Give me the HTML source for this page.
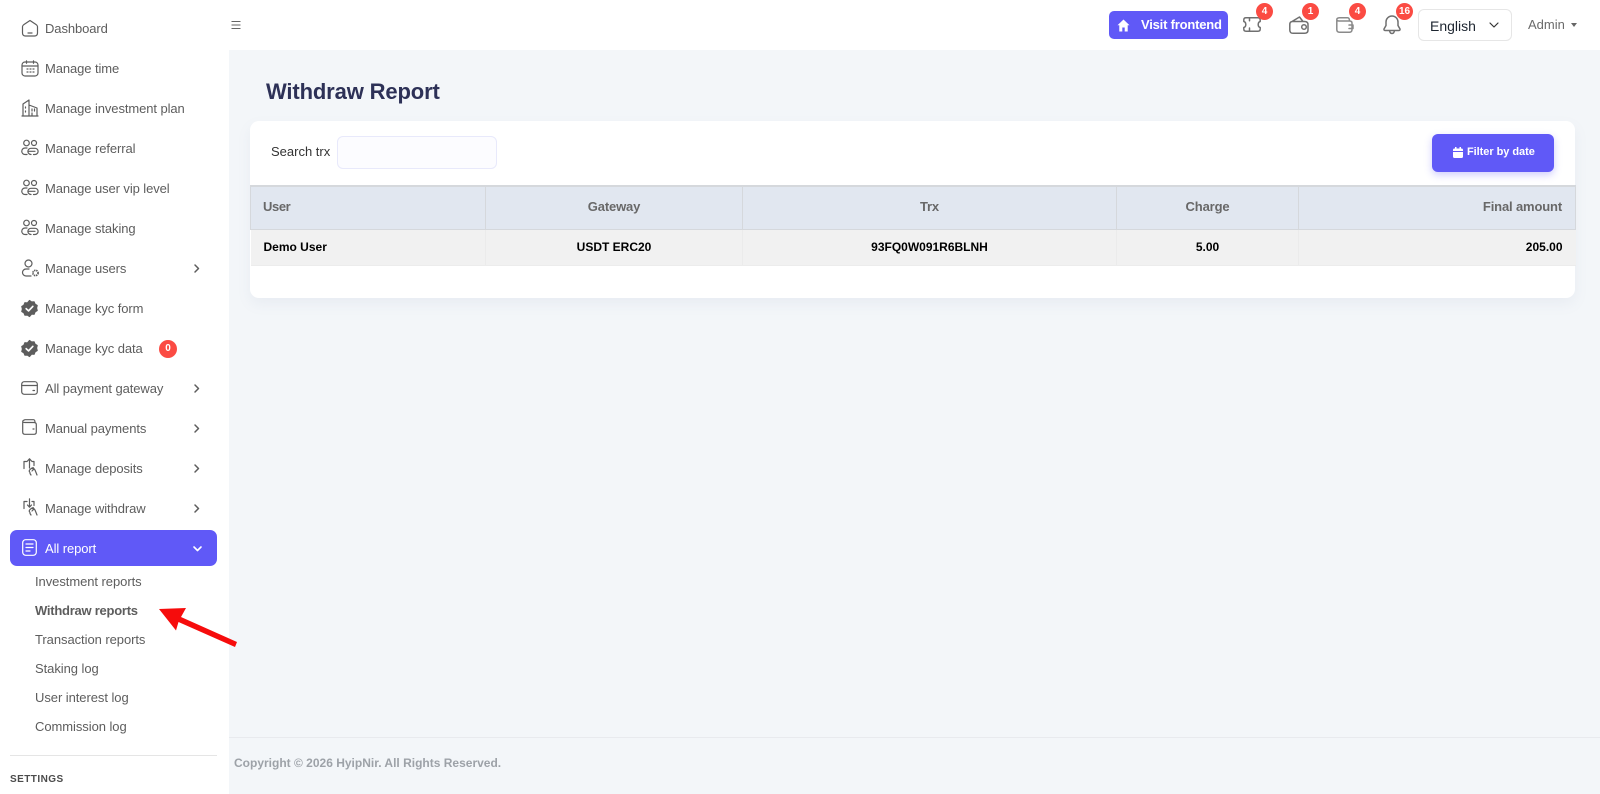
<!DOCTYPE html>
<html lang="en">
<head>
<meta charset="utf-8">
<title>Withdraw Report</title>
<style>
html,body{margin:0;padding:0;width:1600px;height:794px;overflow:hidden;background:#f3f6f9;font-family:"Liberation Sans",sans-serif;color:#5d5d5d}
.a{position:absolute;white-space:nowrap}
#side{position:absolute;left:0;top:0;width:229px;height:794px;background:#fff}
#top{position:absolute;left:229px;top:0;width:1371px;height:50px;background:#fff}
.m{position:absolute;left:45px;font-size:13px;line-height:16px;color:#5d5d5d;white-space:nowrap;letter-spacing:-.09px}
.s{position:absolute;left:35px;font-size:13px;line-height:16px;color:#5d5d5d;white-space:nowrap;letter-spacing:-.06px}
svg{position:absolute;overflow:visible;fill:none;stroke:#5d5d5d;stroke-width:1.2;stroke-linecap:round;stroke-linejoin:round}
svg.h{stroke-width:1.5}
.b{position:absolute;background:#fb4b43;color:#fff;border-radius:50%;font-weight:700;font-size:10px;text-align:center;width:17px;height:17px;line-height:17px}
th,td{padding:0;box-sizing:border-box}
th{font-size:13px;letter-spacing:-.15px;padding-bottom:2px}
td{font-size:12px;padding-bottom:1px}
</style>
</head>
<body>
<div id="side"></div>
<div id="top"></div>

<!-- sidebar icons -->
<svg style="left:21px;top:19px" width="18" height="18" viewBox="0 0 18 18"><path d="M1.500 7.500Q1.500 6.500 3 5.500L9 1.500l6 4q1.500 1 1.500 2v6.500q0 3-3 3h-9q-3 0-3-3zM7 14h4"/></svg>
<svg style="left:21px;top:60px" width="18" height="17" viewBox="0 0 18 17"><rect x="1" y="2" width="16" height="14" rx="3"/><path d="M1 6h16M5.500 .8v2.500M12.500 .8v2.500M6 9h1M9 9h1M12 9h1M6 12h1M9 12h1M12 12h1"/></svg>
<svg style="left:21px;top:99px" width="18" height="18" viewBox="0 0 18 18"><path d="M2 17V5l6-4v16M8 6l8 3v8M1 17h16M4.500 8v1M4.500 12v1M11 10v2M13.500 10v2M11 14v3"/></svg>
<svg style="left:21px;top:139px" width="18" height="17" viewBox="0 0 18 17"><circle cx="5.500" cy="4" r="2.800"/><circle cx="13" cy="4" r="2.500"/><path d="M6 9H4a3.200 3.200 0 0 0 0 6.500h2M10 15.500a3 3 0 0 1 0-6.200h4a3 3 0 0 1 0 6.200h-1.500M8 12.300h6"/></svg>
<svg style="left:21px;top:179px" width="18" height="17" viewBox="0 0 18 17"><circle cx="5.500" cy="4" r="2.800"/><circle cx="13" cy="4" r="2.500"/><path d="M6 9H4a3.200 3.200 0 0 0 0 6.500h2M10 15.500a3 3 0 0 1 0-6.200h4a3 3 0 0 1 0 6.200h-1.500M8 12.300h6"/></svg>
<svg style="left:21px;top:219px" width="18" height="17" viewBox="0 0 18 17"><circle cx="5.500" cy="4" r="2.800"/><circle cx="13" cy="4" r="2.500"/><path d="M6 9H4a3.200 3.200 0 0 0 0 6.500h2M10 15.500a3 3 0 0 1 0-6.200h4a3 3 0 0 1 0 6.200h-1.500M8 12.300h6"/></svg>
<svg style="left:21px;top:259px" width="18" height="18" viewBox="0 0 18 18"><circle cx="7.500" cy="4.500" r="3.500"/><path d="M8 10H5a3.500 3.500 0 0 0 0 7h5"/><circle cx="14.500" cy="14" r="2.600" stroke-width="1.700" stroke-dasharray="1.400 .7" stroke-linecap="butt"/></svg>
<svg style="left:21px;top:300px" width="17" height="17" viewBox="0 0 18 18"><path d="M9 .5l2.200 1.600 2.700-.2 1 2.500 2.300 1.400-.7 2.700.7 2.700-2.300 1.400-1 2.500-2.700-.2L9 17.500l-2.200-1.600-2.700.2-1-2.500L.8 12.200l.7-2.700-.7-2.700 2.300-1.400 1-2.500 2.700.2z" fill="#5d5d5d"/><path d="M5.500 9.200 8 11.500l4.500-4.700" stroke="#fff" stroke-width="1.800"/></svg>
<svg style="left:21px;top:340px" width="17" height="17" viewBox="0 0 18 18"><path d="M9 .5l2.200 1.600 2.700-.2 1 2.500 2.300 1.400-.7 2.700.7 2.700-2.300 1.400-1 2.500-2.700-.2L9 17.500l-2.200-1.600-2.700.2-1-2.500L.8 12.200l.7-2.700-.7-2.700 2.300-1.400 1-2.500 2.700.2z" fill="#5d5d5d"/><path d="M5.500 9.200 8 11.500l4.500-4.700" stroke="#fff" stroke-width="1.800"/></svg>
<svg style="left:21px;top:381px" width="17" height="14" viewBox="0 0 17 14"><rect x=".7" y=".7" width="15.600" height="12.600" rx="2.500"/><path d="M.7 4.500h15.600M12 9.500h1.500"/></svg>
<svg style="left:22px;top:419px" width="15" height="16" viewBox="0 0 15 16"><path d="M.7 3.500V13q0 2.300 2.300 2.300h9q2.300 0 2.300-2.300V5.500Q14.300 3.500 12 3.500H3Q.7 3.500.7 2.500T3 .7h8.500q1.500 0 1.500 2.800M11 10h1"/></svg>
<svg style="left:23px;top:458px" width="15" height="18" viewBox="0 0 15 18"><path d="M4 3.500H1v7M6.500 10V1M4.500 3l2-2.200L8.500 3M9 3.500h2v4M7 14.500q-1.500-1.500 0-3l2-1.500 1.500 1.500L9 13M8 17l-1-1.500M10 9.500l2 2.500 2 5"/></svg>
<svg style="left:23px;top:498px" width="15" height="18" viewBox="0 0 15 18"><path d="M4 3.500H1v7M6.500 9V.8M4.500 7l2 2.200L8.500 7M9 3.500h2v4M7 14.500q-1.500-1.500 0-3l2-1.500 1.500 1.500L9 13M8 17l-1-1.500M10 9.500l2 2.500 2 5"/></svg>

<!-- sidebar menu -->
<div class="m" style="top:21px">Dashboard</div>
<div class="m" style="top:61px">Manage time</div>
<div class="m" style="top:101px">Manage investment plan</div>
<div class="m" style="top:141px">Manage referral</div>
<div class="m" style="top:181px">Manage user vip level</div>
<div class="m" style="top:221px">Manage staking</div>
<div class="m" style="top:261px">Manage users</div>
<div class="m" style="top:301px">Manage kyc form</div>
<div class="m" style="top:341px">Manage kyc data</div>
<div class="m" style="top:381px">All payment gateway</div>
<div class="m" style="top:421px">Manual payments</div>
<div class="m" style="top:461px">Manage deposits</div>
<div class="m" style="top:501px">Manage withdraw</div>
<div class="b" style="left:159px;top:340px;width:18px;height:18px;line-height:18px">0</div>

<svg style="left:194px;top:264px" width="6" height="9" viewBox="0 0 6 9"><path d="M1 1l3.500 3.500L1 8" stroke-width="1.500"/></svg>
<svg style="left:194px;top:384px" width="6" height="9" viewBox="0 0 6 9"><path d="M1 1l3.500 3.500L1 8" stroke-width="1.500"/></svg>
<svg style="left:194px;top:424px" width="6" height="9" viewBox="0 0 6 9"><path d="M1 1l3.500 3.500L1 8" stroke-width="1.500"/></svg>
<svg style="left:194px;top:464px" width="6" height="9" viewBox="0 0 6 9"><path d="M1 1l3.500 3.500L1 8" stroke-width="1.500"/></svg>
<svg style="left:194px;top:504px" width="6" height="9" viewBox="0 0 6 9"><path d="M1 1l3.500 3.500L1 8" stroke-width="1.500"/></svg>

<div class="a" style="left:10px;top:530px;width:207px;height:36px;background:#6059f7;border-radius:7px"></div>
<svg style="left:22px;top:539px;stroke:#fff" width="15" height="17" viewBox="0 0 15 17"><rect x=".7" y=".7" width="13.600" height="15.600" rx="3"/><path d="M4 5h7M4 8.500h7M4 12h4"/></svg>
<div class="m" style="top:541px;color:#fff">All report</div>
<svg style="left:193px;top:546px;stroke:#fff" width="9" height="6" viewBox="0 0 9 6"><path d="M1 1l3.500 3.500L8 1" stroke-width="1.600"/></svg>

<div class="s" style="top:574px">Investment reports</div>
<div class="s" style="top:603px;font-weight:700;letter-spacing:-.25px">Withdraw reports</div>
<div class="s" style="top:632px">Transaction reports</div>
<div class="s" style="top:661px">Staking log</div>
<div class="s" style="top:690px">User interest log</div>
<div class="s" style="top:719px">Commission log</div>

<div class="a" style="left:10px;top:755px;width:207px;height:1px;background:#e5e5e5"></div>
<div class="a" style="left:10px;top:773px;font-size:10px;line-height:14px;font-weight:700;letter-spacing:.45px;color:#4b4b4b">SETTINGS</div>

<!-- red arrow -->
<svg style="left:159px;top:608px;stroke:none" width="78" height="40" viewBox="0 0 78 40"><path d="M0 1 27 0 22 9 78 34 76 39 19.500 14 17 22.500z" fill="#f60c0c"/></svg>

<!-- header -->
<svg style="left:231px;top:20px;stroke:#666" width="10" height="10" viewBox="0 0 10 10"><path d="M.5 1.500h9M.5 5h9M.5 8.500h9" stroke-width="1.100" stroke-linecap="butt"/></svg>

<div class="a" style="left:1109px;top:11px;width:119px;height:28px;background:#6059f7;border-radius:5px"></div>
<svg style="left:1117px;top:19px;stroke:none" width="13" height="13" viewBox="0 0 13 13"><path d="M6.500.5.500 6.300h1.800V12.500h3V8.500h2.400v4h3V6.300h1.800z" fill="#fff"/></svg>
<div class="a" style="left:1141px;top:17px;font-size:13px;line-height:16px;font-weight:700;color:#fff;letter-spacing:-.2px">Visit frontend</div>

<svg class="h" style="left:1243px;top:17px;stroke:#707070" width="18" height="15" viewBox="0 0 18 15"><path d="M3 .8h12q2.200 0 2.200 2.200v1.500q-2 .6-2 3t2 3V12q0 2.200-2.200 2.200H3Q.8 14.200.8 12v-1.500q2-.6 2-3t-2-3V3Q.8.800 3 .8zM6.500.8v3M6.500 11v3.200"/></svg>
<svg class="h" style="left:1289px;top:16px;stroke:#707070" width="20" height="18" viewBox="0 0 20 18"><path d="M3 5.500 10.500 1 14 5.500M3.500 5.500h12q3.500 0 3.500 3v5.500q0 3.300-3.500 3.300H4Q.8 17.300.8 14V8.500q0-3 2.700-3z"/><circle cx="15" cy="11" r="2.300"/></svg>
<svg class="h" style="left:1336px;top:17px;stroke:#8a8a8a" width="18" height="16" viewBox="0 0 18 16"><path d="M.8 3.500V12.500Q.8 15.200 3.500 15.200h10q2.500 0 2.500-2.700V6Q16 4 13.500 4H3Q.8 4 .8 2.500T3.500.8h8q2 0 2 3.200M13 8h4v3.500h-4"/></svg>
<svg class="h" style="left:1383px;top:15px;stroke:#707070" width="18" height="19" viewBox="0 0 18 19"><path d="M9 1a6 6 0 0 0-6 6v3.500L1 14q-.2 1.500 1 1.500h14q1.200 0 1-1.500l-2-3.500V7a6 6 0 0 0-6-6zM6.500 15.500q.5 3 2.500 3t2.500-3"/></svg>
<div class="b" style="left:1256px;top:3px">4</div>
<div class="b" style="left:1302px;top:3px">1</div>
<div class="b" style="left:1349px;top:3px">4</div>
<div class="b" style="left:1396px;top:3px">16</div>

<div class="a" style="left:1418px;top:9px;width:94px;height:32px;box-sizing:border-box;border:1px solid #e6e6e6;border-radius:6px;background:#fff"></div>
<div class="a" style="left:1430px;top:17px;font-size:14px;line-height:18px;color:#1d2530">English</div>
<svg style="left:1489px;top:22px;stroke:#333" width="10" height="6" viewBox="0 0 10 6"><path d="M1 1l4 4 4-4"/></svg>
<div class="a" style="left:1528px;top:17px;font-size:13px;line-height:16px;color:#6b6b6b">Admin</div>
<div class="a" style="left:1571px;top:23px;width:0;height:0;border:3.500px solid transparent;border-top:4px solid #666;border-bottom:0"></div>

<!-- title -->
<div class="a" style="left:266px;top:78px;font-size:22px;line-height:27px;font-weight:700;color:#2d3157;letter-spacing:-.14px">Withdraw Report</div>

<!-- card -->
<div class="a" style="left:250px;top:121px;width:1325px;height:177px;background:#fff;border-radius:9px;box-shadow:0 6px 14px rgba(120,130,160,.08)"></div>
<div class="a" style="left:271px;top:144px;font-size:13px;line-height:16px;color:#333">Search trx</div>
<div class="a" style="left:337px;top:136px;width:160px;height:33px;box-sizing:border-box;background:#fcfcff;border:1px solid #e8e9fb;border-radius:6px"></div>
<div class="a" style="left:1432px;top:134px;width:122px;height:38px;background:#6059f7;border-radius:6px;box-shadow:0 3px 8px rgba(96,89,247,.3)"></div>
<svg style="left:1453px;top:147px;stroke:none" width="10" height="11" viewBox="0 0 10 11"><path d="M2 0h1.500v1.500h3V0H8v1.500h.5q1.500 0 1.500 1.500V4H0V3q0-1.500 1.500-1.500H2zM0 5h10v4.500Q10 11 8.500 11h-7Q0 11 0 9.500z" fill="#fff"/></svg>
<div class="a" style="left:1467px;top:145px;font-size:11px;line-height:15px;font-weight:700;color:#fff;letter-spacing:-.05px">Filter by date</div>

<table class="a" style="left:250px;top:185px;width:1325px;height:79px;border-collapse:collapse;table-layout:fixed">
<colgroup><col style="width:235px"><col style="width:257px"><col style="width:374px"><col style="width:182px"><col style="width:277px"></colgroup>
<tr style="height:43px;background:#e1e7f0;color:#686868;font-weight:700">
<th style="border:1px solid #d5d8dc;border-top-width:2px;text-align:left;padding-left:12px;letter-spacing:-.4px">User</th>
<th style="border:1px solid #d5d8dc;border-top-width:2px;text-align:center">Gateway</th>
<th style="border:1px solid #d5d8dc;border-top-width:2px;text-align:center">Trx</th>
<th style="border:1px solid #d5d8dc;border-top-width:2px;text-align:center">Charge</th>
<th style="border:1px solid #d5d8dc;border-top-width:2px;text-align:right;padding-right:13px">Final amount</th>
</tr>
<tr style="height:36px;background:#f1f1f1;color:#000;font-weight:700">
<td style="border-right:1px solid #ebebeb;border-bottom:1px solid #ececec;padding-left:13px">Demo User</td>
<td style="border-right:1px solid #ebebeb;border-bottom:1px solid #ececec;text-align:center">USDT ERC20</td>
<td style="border-right:1px solid #ebebeb;border-bottom:1px solid #ececec;text-align:center">93FQ0W091R6BLNH</td>
<td style="border-right:1px solid #ebebeb;border-bottom:1px solid #ececec;text-align:center">5.00</td>
<td style="border-bottom:1px solid #ececec;text-align:right;padding-right:13px">205.00</td>
</tr>
</table>

<!-- footer -->
<div class="a" style="left:229px;top:737px;width:1371px;height:1px;background:#e8eaee"></div>
<div class="a" style="left:234px;top:755px;font-size:12px;line-height:16px;font-weight:700;color:#9da2a8">Copyright © 2026 HyipNir. All Rights Reserved.</div>
</body>
</html>
